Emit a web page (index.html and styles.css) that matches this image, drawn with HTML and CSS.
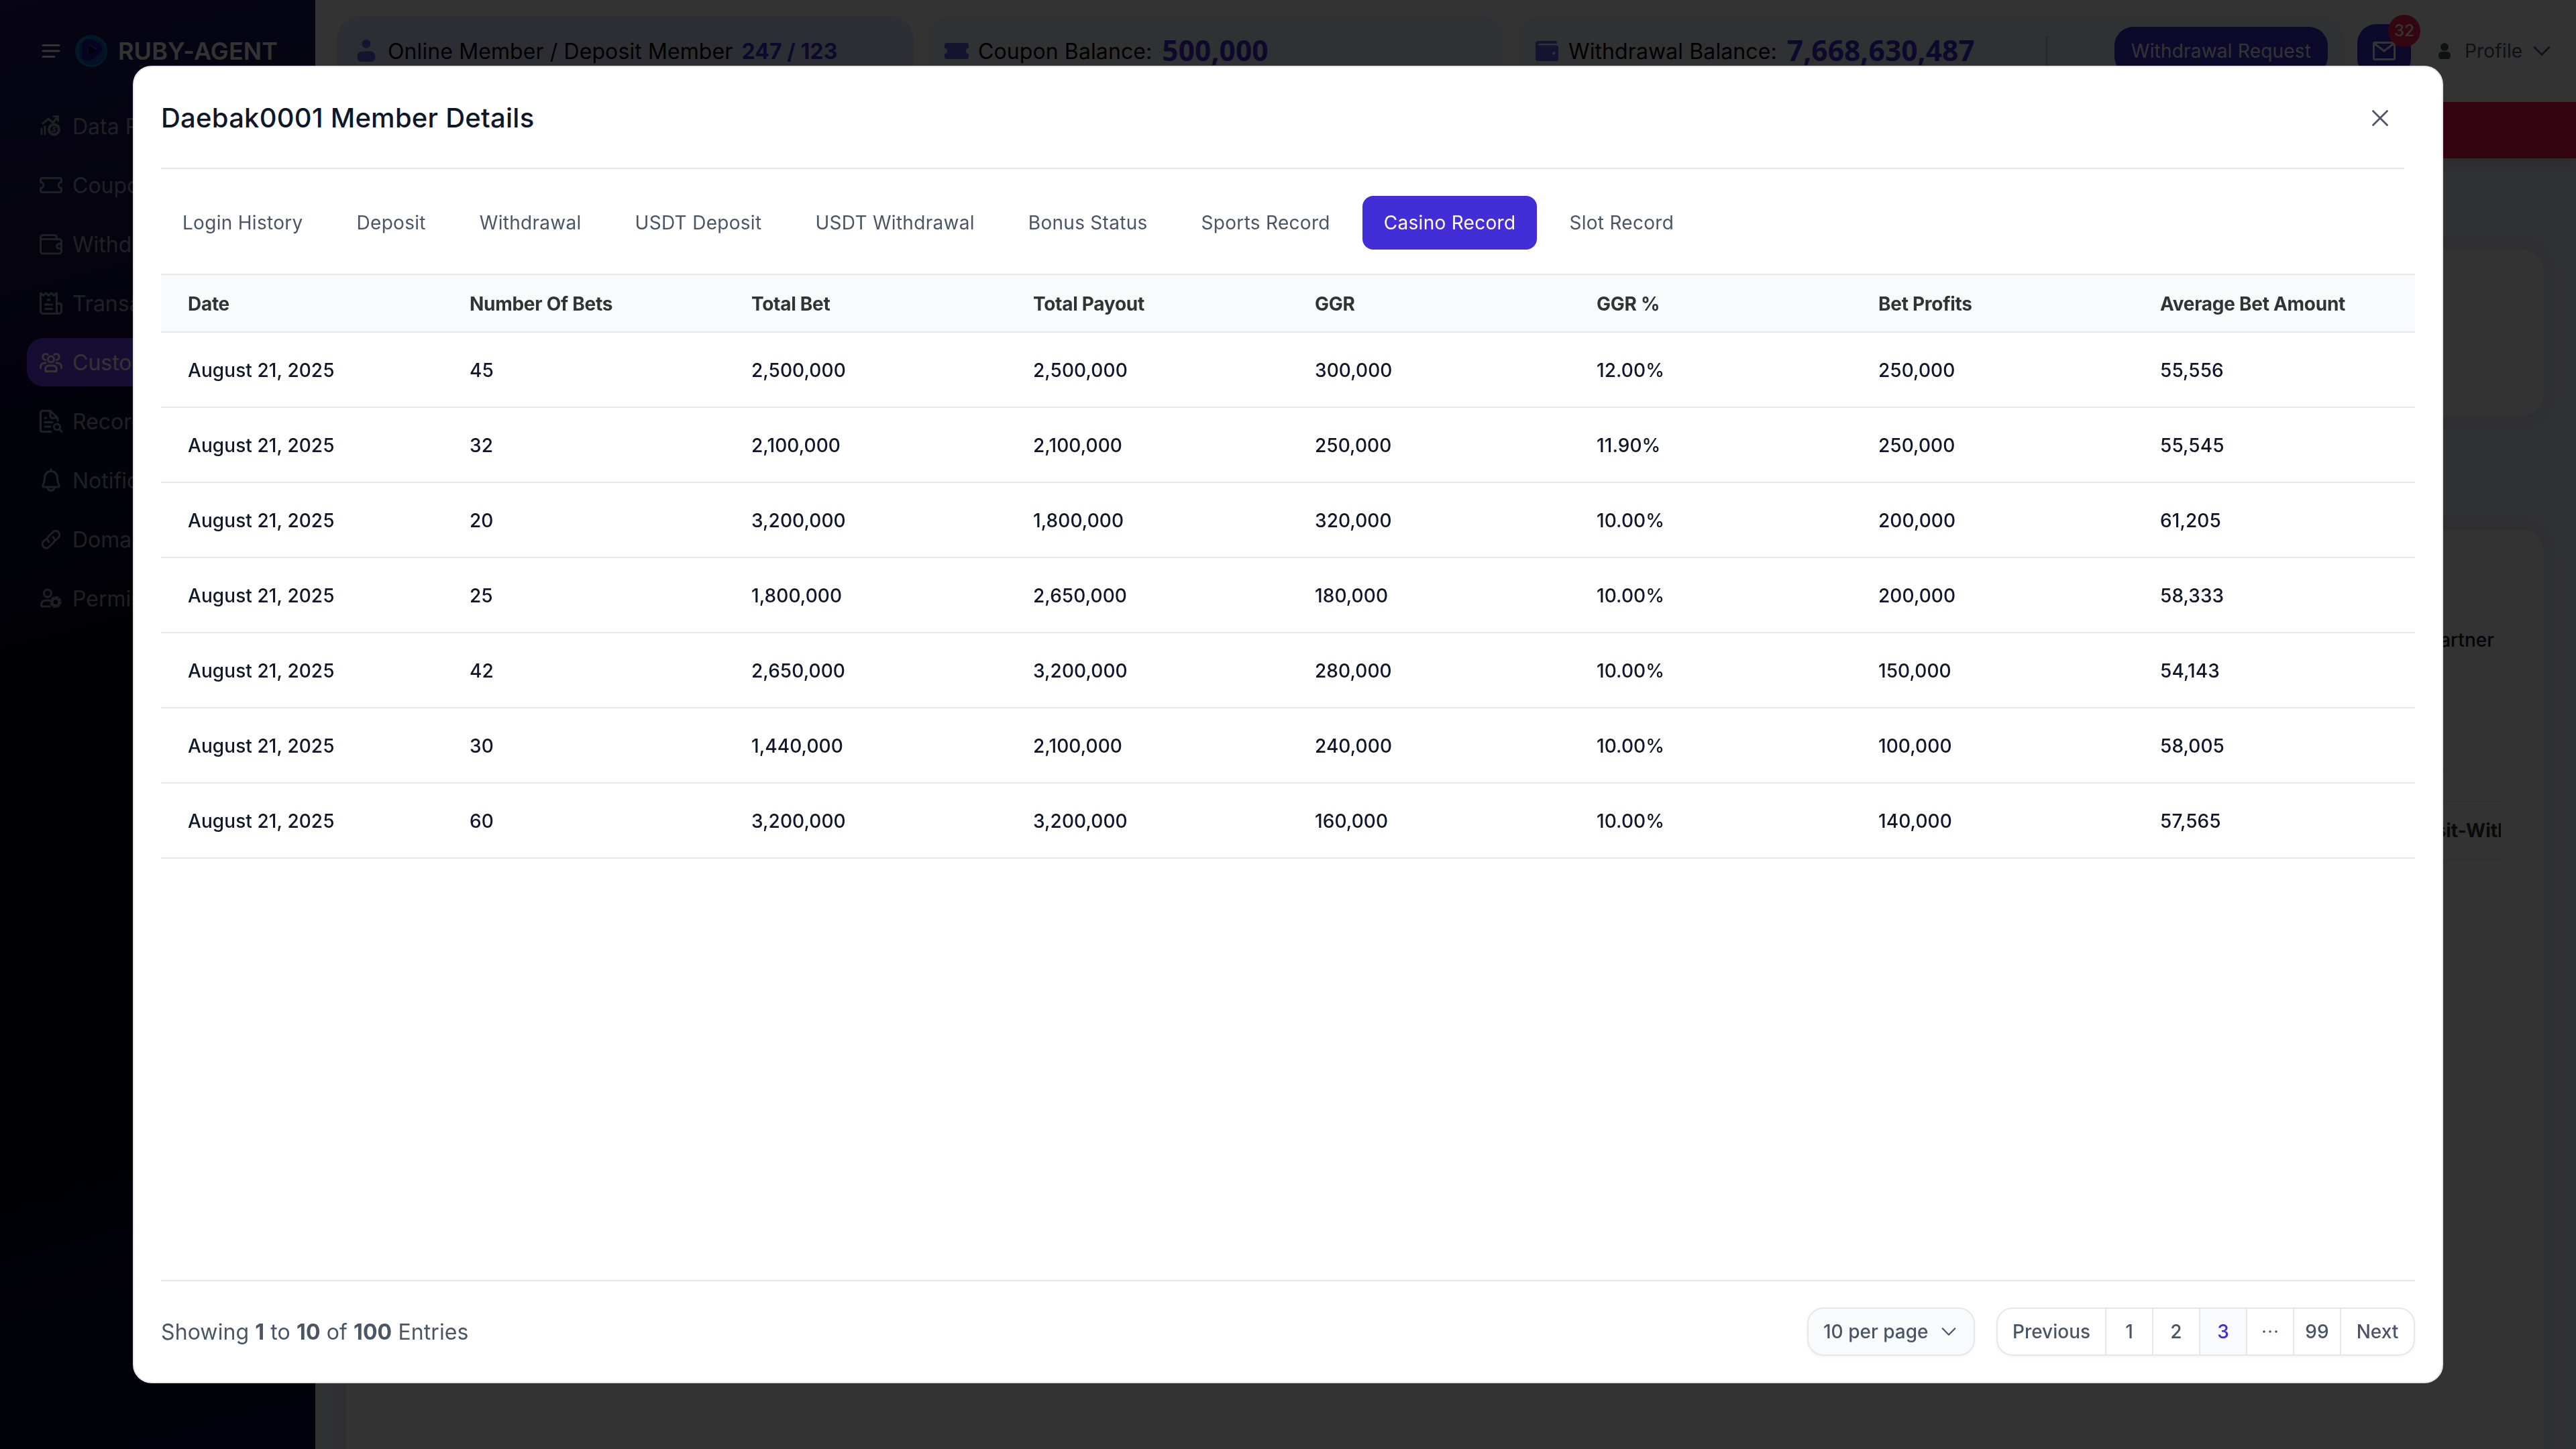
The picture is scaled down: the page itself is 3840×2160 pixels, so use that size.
FILE: index.html
```html
<!DOCTYPE html>
<html lang="en">
<head>
  <meta charset="UTF-8">
  <title>Ruby-Agent | Member Details</title>
  <meta name="viewport" content="width=device-width, initial-scale=1.0">
  <link rel="stylesheet" href="styles.css">
</head>
<body>
  <div class="app">
    <aside class="sidebar">
      <div class="brand">
        <svg class="menu-icon" viewBox="0 0 36 36"><path d="M6 9.5h24M6 18h24M6 26.5h17"/></svg>
        <svg class="logo" viewBox="0 0 48 48">
          <circle cx="24" cy="24" r="24" fill="#0b7cc0"/>
          <circle cx="25" cy="25" r="20" fill="#0a58b0"/>
          <path d="M14.500 32V16c0-6 4-7.500 9-5l9 4.500c5 3 5 8 0 11l-8 6c-5 3.500-10 2-10-.5z" fill="none" stroke="#1410a0" stroke-width="8" stroke-linejoin="round"/>
          <path d="M19.500 16l13 7-13 8z" fill="#06042a"/>
        </svg>
        <span>RUBY-AGENT</span>
      </div>
      <nav class="nav">
        <a class="nav-item" href="#">
          <svg viewBox="0 0 36 36"><path d="M6 14l8-7 7 6 7-9M22 3.5h6.500v6.500M4 22v8M9 18.500v11.500"/><circle cx="22.500" cy="23" r="7.500" stroke-width="4"/><path d="M25 20.500c-3-2-5 1-2.500 2.300s2.500 4-2.500 2.700"  stroke-width="2"/></svg>
          <span>Data Report</span>
        </a>
        <a class="nav-item" href="#">
          <svg viewBox="0 0 36 36"><path d="M5 7.500h26a2.500 2.500 0 0 1 2.500 2.500v3.500a4.500 4.500 0 0 0 0 9V26a2.500 2.500 0 0 1-2.500 2.500H5A2.500 2.500 0 0 1 2.500 26v-3.500a4.500 4.500 0 0 0 0-9V10A2.500 2.500 0 0 1 5 7.500z"/></svg>
          <span>Coupon</span>
        </a>
        <a class="nav-item" href="#">
          <svg viewBox="0 0 36 36"><path d="M2.500 10.500V29a3 3 0 0 0 3 3h25a3 3 0 0 0 3-3V13.500a3 3 0 0 0-3-3h-28zM2.500 10.500V8a3.500 3.500 0 0 1 3.500-3.500h17A3.500 3.500 0 0 1 26.500 8v2.500M33.500 17.500h-3.500a3.500 3.500 0 0 0 0 7h3.500"/></svg>
          <span>Withdrawal</span>
        </a>
        <a class="nav-item" href="#">
          <svg viewBox="0 0 36 36"><path d="M2.500 3l4 3.500 4-3.500 4 3.500 4-3.500 4 3.500 4-3.500v30.500H6a3.500 3.500 0 0 1-3.500-3.500V3zM26.500 18.500H31a2.500 2.500 0 0 1 2.500 2.500v9a3.500 3.500 0 0 1-7 0M13 13h3M9.500 20h10M9.500 26.500h10"/></svg>
          <span>Transaction</span>
        </a>
        <a class="nav-item active" href="#">
          <svg viewBox="0 0 36 36"><circle cx="18" cy="13.500" r="4.500"/><path d="M10 31.500c-1.500-7 2-8.500 5-8.500h6c3 0 6.500 1.500 5 8.500zM9.500 14.500A4.500 4.500 0 1 1 13 6.500M26.500 14.500A4.500 4.500 0 1 0 23 6.500M2.500 26.500c-.5-6 2.500-7.500 7.500-7.500M33.500 26.500c.5-6-2.500-7.500-7.500-7.500"/></svg>
          <span>Customer</span>
        </a>
        <a class="nav-item" href="#">
          <svg viewBox="0 0 36 36"><path d="M18 33.500H5A2.500 2.500 0 0 1 2.500 31V5A2.500 2.500 0 0 1 5 2.500h12L28 13v4M17 3v7.500a2.500 2.500 0 0 0 2.500 2.500H28M9 13h2M9 19.500h11M9 26h8"/><circle cx="27" cy="26.500" r="4.500"/><path d="M30.500 30l3.500 3.500"/></svg>
          <span>Records</span>
        </a>
        <a class="nav-item" href="#">
          <svg viewBox="0 0 36 36"><path d="M18 1.500v3M18 4.500c-6 0-9.500 4.500-9.500 9.500 0 7-1 8.500-2.500 11-.8 1.500-.2 3 1.500 3h21c1.700 0 2.300-1.500 1.500-3-1.500-2.500-2.500-4-2.500-11 0-5-3.500-9.500-9.500-9.500zM12.500 28c1 7 10 7 11 0"/></svg>
          <span>Notification</span>
        </a>
        <a class="nav-item" href="#">
          <svg viewBox="0 0 36 36"><path d="M15 22c-4-4-2.500-6.500 0-9l6-6c5-5 13 2.500 8.500 8L25 19.500M21 14.500c4 4 2.500 6.500 0 9l-6 6c-5 5-13-2.500-8.500-8L11 17"/></svg>
          <span>Domain</span>
        </a>
        <a class="nav-item" href="#">
          <svg viewBox="0 0 36 36"><circle cx="13" cy="10.500" r="5.500"/><path d="M16 30H6c-2.500 0-3-2-2-5 1-2.500 3-4 6-4h5"/><circle cx="25" cy="23.500" r="5"/><circle cx="25" cy="23.500" r="7.500" stroke-dasharray="2.900 3" stroke-width="2.500"/></svg>
          <span>Permission</span>
        </a>
      </nav>
    </aside>

    <div class="main">
      <header class="topbar">
        <div class="stat stat-members">
          <svg class="stat-icon" viewBox="0 0 36 36"><circle cx="18" cy="7.500" r="6.500"/><path d="M4.500 27c0-6 4-8.500 8-8.500h11c4 0 8 2.500 8 8.500 0 5-3 7-6 7h-15c-3 0-6-2-6-7z"/></svg>
          <span>Online Member / Deposit Member</span>
          <b>247 / 123</b>
        </div>
        <div class="stat stat-coupon">
          <svg class="stat-icon" viewBox="0 0 36 36"><path d="M3 6h30a3 3 0 0 1 3 3v5a4 4 0 0 0 0 8v5a3 3 0 0 1-3 3H3a3 3 0 0 1-3-3v-5a4 4 0 0 0 0-8V9a3 3 0 0 1 3-3z"/></svg>
          <span>Coupon Balance:</span>
          <b class="amount">500,000</b>
        </div>
        <div class="stat stat-withdrawal">
          <svg class="stat-icon" viewBox="0 0 36 36"><path fill-rule="evenodd" d="M5 3h25a3 3 0 0 1 3 3v1H6a1 1 0 0 0 0 2.500h25.500A3.500 3.500 0 0 1 35 13v16.500a3.500 3.500 0 0 1-3.500 3.500h-27A3.500 3.500 0 0 1 1 29.500V7a4 4 0 0 1 4-4zM28.500 19a2.300 2.300 0 1 0 0 4.600 2.300 2.300 0 0 0 0-4.600z"/></svg>
          <span>Withdrawal Balance:</span>
          <b class="amount">7,668,630,487</b>
          <i class="divider"></i>
          <button class="request-btn">Withdrawal Request</button>
        </div>
        <button class="mail-btn">
          <svg viewBox="0 0 36 36"><path d="M4 5.500h28a1.500 1.500 0 0 1 1.500 1.500v22a1.500 1.500 0 0 1-1.500 1.500H4A1.500 1.500 0 0 1 2.500 29V7A1.500 1.500 0 0 1 4 5.500zM3.500 7L18 18 32.500 7"/></svg>
          <span class="badge">32</span>
        </button>
        <div class="profile">
          <svg class="person" viewBox="0 0 20 24"><circle cx="10" cy="6" r="6"/><path d="M1 19c0-4 2.500-6 5-6h8c2.500 0 5 2 5 6 0 3.500-2 5-4 5H5c-2 0-4-1.500-4-5z"/></svg>
          <span>Profile</span>
          <svg class="chevron" viewBox="0 0 26 14"><path d="M2 1.500l11 11 11-11"/></svg>
        </div>
      </header>
      <div class="notice"></div>
      <div class="content">
        <section class="card card-summary"></section>
        <section class="card card-list">
          <div class="card-title">Partner</div>
          <div class="card-line"></div>
          <div class="card-head"><span>Deposit-Withdrawal</span></div>
        </section>
      </div>
    </div>
  </div>

  <div class="overlay">
    <div class="modal">
      <div class="modal-header">
        <h2>Daebak0001 Member Details</h2>
        <svg class="close" viewBox="0 0 24 24"><path d="M1.500 1.500l21 21M22.500 1.500l-21 21"/></svg>
      </div>
      <div class="tabs">
        <button class="tab">Login History</button>
        <button class="tab">Deposit</button>
        <button class="tab">Withdrawal</button>
        <button class="tab">USDT Deposit</button>
        <button class="tab">USDT Withdrawal</button>
        <button class="tab">Bonus Status</button>
        <button class="tab">Sports Record</button>
        <button class="tab active">Casino Record</button>
        <button class="tab">Slot Record</button>
      </div>
      <table class="records">
        <thead>
          <tr><th>Date</th><th>Number Of Bets</th><th>Total Bet</th><th>Total Payout</th><th>GGR</th><th>GGR %</th><th>Bet Profits</th><th>Average Bet Amount</th></tr>
        </thead>
        <tbody>
          <tr><td>August 21, 2025</td><td>45</td><td>2,500,000</td><td>2,500,000</td><td>300,000</td><td>12.00%</td><td>250,000</td><td>55,556</td></tr>
          <tr><td>August 21, 2025</td><td>32</td><td>2,100,000</td><td>2,100,000</td><td>250,000</td><td>11.90%</td><td>250,000</td><td>55,545</td></tr>
          <tr><td>August 21, 2025</td><td>20</td><td>3,200,000</td><td>1,800,000</td><td>320,000</td><td>10.00%</td><td>200,000</td><td>61,205</td></tr>
          <tr><td>August 21, 2025</td><td>25</td><td>1,800,000</td><td>2,650,000</td><td>180,000</td><td>10.00%</td><td>200,000</td><td>58,333</td></tr>
          <tr><td>August 21, 2025</td><td>42</td><td>2,650,000</td><td>3,200,000</td><td>280,000</td><td>10.00%</td><td>150,000</td><td>54,143</td></tr>
          <tr><td>August 21, 2025</td><td>30</td><td>1,440,000</td><td>2,100,000</td><td>240,000</td><td>10.00%</td><td>100,000</td><td>58,005</td></tr>
          <tr><td>August 21, 2025</td><td>60</td><td>3,200,000</td><td>3,200,000</td><td>160,000</td><td>10.00%</td><td>140,000</td><td>57,565</td></tr>
        </tbody>
      </table>
      <div class="modal-footer">
        <p class="entries">Showing <b>1</b> to <b>10</b> of <b>100</b> Entries</p>
        <button class="per-page">
          10 per page
          <svg class="chevron" viewBox="0 0 26 14"><path d="M2 1.500l11 11 11-11"/></svg>
        </button>
        <div class="pager">
          <a class="prev" href="#">Previous</a>
          <a href="#">1</a>
          <a href="#">2</a>
          <a class="current" href="#">3</a>
          <a href="#"><svg class="dots" viewBox="0 0 22 4"><circle cx="2" cy="2" r="1.800"/><circle cx="11" cy="2" r="1.800"/><circle cx="20" cy="2" r="1.800"/></svg></a>
          <a href="#">99</a>
          <a class="next" href="#">Next</a>
        </div>
      </div>
    </div>
  </div>
</body>
</html>
```
FILE: styles.css
```css
* {
  box-sizing: border-box;
}
body {
  margin: 0;
  height: 100vh;
  overflow: hidden;
  font-family: Inter, "Liberation Sans", sans-serif;
  font-size: 28px;
  font-weight: 450;
  color: #0f172a;
}
button {
  border: none;
  font: inherit;
  cursor: pointer;
}
a {
  color: inherit;
  text-decoration: none;
}
svg {
  display: block;
  flex: none;
}
.app {
  display: flex;
  height: 100vh;
}

/* Sidebar */
.sidebar {
  width: 470px;
  flex: none;
  background: linear-gradient(165deg, #211869 0%, #151046 18%, #0a0a35 33%, #02020f 48%, #00000a 65%, #09093c 100%);
}
.brand {
  display: flex;
  align-items: center;
  height: 152px;
  padding-left: 58px;
  color: #fff;
  font-size: 36px;
  font-weight: 600;
  letter-spacing: 0.1px;
}
.menu-icon {
  width: 36px;
  height: 36px;
  margin-right: 18px;
  fill: none;
  stroke: #fff;
  stroke-width: 3;
  stroke-linecap: round;
}
.logo {
  width: 48px;
  height: 48px;
  margin-right: 16px;
}
.nav {
  display: flex;
  flex-direction: column;
  gap: 16px;
  padding: 0 40px;
}
.nav-item {
  display: flex;
  align-items: center;
  gap: 14px;
  height: 72px;
  padding-left: 18px;
  border-radius: 24px;
  color: #99a1af;
  font-size: 32px;
  font-weight: 400;
}
.nav-item svg {
  width: 36px;
  height: 36px;
  fill: none;
  stroke: currentColor;
  stroke-width: 3;
  stroke-linecap: round;
  stroke-linejoin: round;
}
.nav-item.active {
  background: #7341fa;
  color: #fff;
}

/* Top bar */
.main {
  flex: 1;
  min-width: 0;
  display: flex;
  flex-direction: column;
  background: #f1f2f8;
}
.topbar {
  display: flex;
  align-items: center;
  height: 152px;
  flex: none;
  padding-left: 32px;
  background: #fff;
}
.stat {
  display: flex;
  align-items: center;
  width: 860px;
  height: 104px;
  margin-right: 20px;
  padding-left: 26px;
  border-radius: 36px;
  background: #f1f2f8;
  color: #000;
  font-size: 32px;
  font-weight: 400;
  letter-spacing: 0.1px;
  white-space: nowrap;
}
.stat-members {
  background: #e0e7ff;
}
.stat-withdrawal {
  width: 1232px;
}
.stat b {
  margin-left: 13px;
  color: #432dd7;
  font-weight: 700;
}
.stat .amount {
  margin-left: 15px;
  padding-bottom: 3px;
  font-family: "Noto Sans", sans-serif;
  font-size: 42.4px;
}
.stat-icon {
  width: 36px;
  height: 36px;
  margin-right: 14px;
  fill: #6366f1;
}
.divider {
  width: 4px;
  height: 44px;
  margin: 0 99px 0 auto;
  background: #c7d2fe;
}
.request-btn {
  width: 318px;
  height: 72px;
  margin-right: 24px;
  padding: 0;
  border-radius: 28px;
  background: #432dd7;
  color: #fff;
  font-size: 28px;
  letter-spacing: 0.2px;
}
.mail-btn {
  position: relative;
  display: flex;
  align-items: center;
  justify-content: center;
  width: 80px;
  height: 80px;
  border-radius: 28px;
  background: #432dd7;
  padding: 0;
}
.mail-btn svg {
  width: 36px;
  height: 36px;
  fill: none;
  stroke: #fff;
  stroke-width: 3;
}
.badge {
  position: absolute;
  top: -14px;
  right: -14px;
  width: 48px;
  height: 48px;
  border-radius: 50%;
  background: #ff2056;
  color: #fff;
  font-size: 24px;
  line-height: 48px;
}
.profile {
  display: flex;
  align-items: center;
  margin-left: 40px;
  color: #4a5565;
  font-weight: 400;
  letter-spacing: 0.2px;
}
.person {
  width: 20px;
  height: 24px;
  margin-right: 20px;
  fill: currentColor;
}
.chevron {
  width: 26px;
  height: 14px;
  fill: none;
  stroke: currentColor;
  stroke-width: 2.6;
  stroke-linecap: round;
  stroke-linejoin: round;
}
.profile .chevron {
  margin-left: 16px;
}
.notice {
  height: 84px;
  flex: none;
  background: #ff0f4d;
  box-shadow: 0 6px 14px rgba(0, 0, 0, 0.12);
}

/* Page behind the dialog */
.content {
  flex: 1;
  display: flex;
  flex-direction: column;
  gap: 170px;
  padding: 136px 48px 0 46px;
}
.card {
  border-radius: 32px;
  background: #fff;
  box-shadow: 0 0 24px rgba(30, 64, 175, 0.1);
}
.card-summary {
  height: 248px;
}
.card-list {
  flex: 1;
  margin-bottom: -80px;
  padding: 140px 64px 0 40px;
}
.card-title {
  padding-right: 10px;
  line-height: 48px;
  text-align: right;
}
.card-line {
  height: 2px;
  margin-top: 168px;
  background: #f3f4f6;
}
.card-head {
  display: flex;
  height: 88px;
  margin-top: 46px;
  align-items: center;
  border: 2px solid #eeeff2;
  border-width: 2px 0;
  background: #fcfcfd;
  color: #333;
  font-weight: 700;
  overflow: hidden;
}
.card-head span {
  margin-left: auto;
  margin-right: -105px;
}

/* Member details dialog */
.overlay {
  position: fixed;
  inset: 0;
  display: flex;
  justify-content: center;
  align-items: flex-start;
  padding-top: 98px;
  background: rgba(0, 0, 0, 0.8);
}
.modal {
  display: flex;
  flex-direction: column;
  width: 3444px;
  height: 1964px;
  padding: 0 40px;
  border: 2px solid #e5e7eb;
  border-radius: 28px;
  background: #fff;
}
.modal-header {
  display: flex;
  align-items: center;
  justify-content: space-between;
  height: 152px;
  margin-right: 16px;
  padding-right: 24px;
  border-bottom: 2px solid #e5e7eb;
}
.modal-header h2 {
  margin: 0;
  font-size: 40px;
  font-weight: 550;
  letter-spacing: 0.24px;
}
.close {
  width: 24px;
  height: 24px;
  margin-top: 2px;
  fill: none;
  stroke: #4a5565;
  stroke-width: 2.8;
  stroke-linecap: round;
}
.tabs {
  display: flex;
  gap: 16px;
  margin: 40px 0 36px;
}
.tab {
  height: 80px;
  padding: 0 32px;
  border-radius: 16px;
  background: none;
  color: #4a5565;
  font-weight: 400;
  letter-spacing: 0.29px;
}
.tab.active {
  background: #432dd7;
  color: #fff;
}
.records {
  width: 100%;
  table-layout: fixed;
  border-spacing: 0;
  text-align: left;
}
.records th,
.records td {
  padding: 2px 40px 0;
  border-bottom: 2px solid #e5e7eb;
  white-space: nowrap;
}
.records th {
  height: 88px;
  border-top: 2px solid #e5e7eb;
  background: #f9fafb;
  color: #333;
  font-weight: 700;
  letter-spacing: -0.28px;
}
.records td {
  height: 112px;
  letter-spacing: 0.08px;
}
.modal-footer {
  display: flex;
  align-items: center;
  height: 152px;
  margin-top: auto;
  border-top: 2px solid #e5e7eb;
  color: #4a5565;
}
.entries {
  margin: 0 auto 0 0;
  font-size: 32px;
  font-weight: 400;
  letter-spacing: 0.1px;
}
.entries b {
  font-weight: 700;
}
.per-page {
  display: flex;
  align-items: center;
  justify-content: space-between;
  width: 250px;
  height: 72px;
  margin-right: 32px;
  padding: 0 26px 0 22px;
  border: 2px solid #e5e7eb;
  border-radius: 24px;
  background: #f9fafb;
  box-shadow: 0 2px 4px rgba(0, 0, 0, 0.05);
  color: #4a5565;
}
.per-page .chevron {
  width: 22px;
  height: 12px;
}
.pager {
  display: flex;
  height: 72px;
  border: 2px solid #e5e7eb;
  border-radius: 24px;
  box-shadow: 0 2px 4px rgba(0, 0, 0, 0.05);
  overflow: hidden;
}
.pager a {
  display: flex;
  align-items: center;
  justify-content: center;
  width: 70px;
  border-right: 2px solid #e5e7eb;
}
.pager .prev {
  width: 162px;
}
.pager .next {
  width: 108px;
  border-right: none;
}
.pager .current {
  background: #f9fafb;
  color: #432dd7;
}
.dots {
  width: 22px;
  height: 4px;
  fill: currentColor;
}
```
